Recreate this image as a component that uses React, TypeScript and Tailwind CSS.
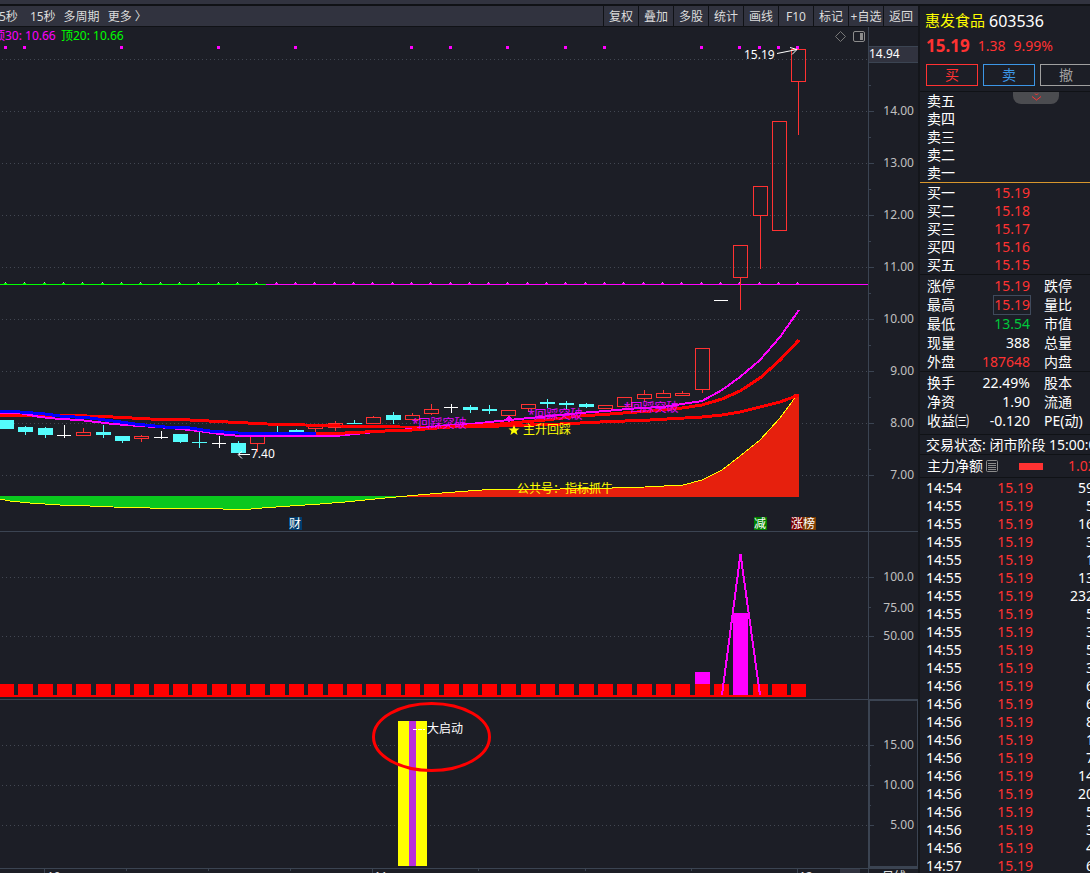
type CandleKind = "up" | "down" | "flat";

interface Candle {
  kind: CandleKind;
  top: number;
  bottom: number;
  high?: number;
  low?: number;
}

const candles: Candle[] = [
  { kind: "down", top: 420, bottom: 429 },
  { kind: "down", top: 427, bottom: 432, high: 426, low: 435 },
  { kind: "down", top: 428, bottom: 435, high: 427, low: 438 },
  { kind: "flat", top: 435, bottom: 436, high: 425, low: 438 },
  { kind: "up", top: 432, bottom: 436, high: 428 },
  { kind: "down", top: 432, bottom: 435, high: 425, low: 438 },
  { kind: "down", top: 436, bottom: 441, low: 443 },
  { kind: "up", top: 436, bottom: 439, high: 435, low: 442 },
  { kind: "flat", top: 437, bottom: 438, high: 431, low: 439 },
  { kind: "down", top: 434, bottom: 442, low: 443 },
  { kind: "down", top: 442, bottom: 443, high: 432, low: 448 },
  { kind: "flat", top: 443, bottom: 444, high: 436, low: 448 },
  { kind: "down", top: 443, bottom: 453, high: 441 },
  { kind: "up", top: 436, bottom: 444, low: 452 },
  { kind: "down", top: 432, bottom: 433, high: 425 },
  { kind: "down", top: 430, bottom: 432, high: 429, low: 433 },
  { kind: "up", top: 424, bottom: 429, low: 432 },
  { kind: "up", top: 423, bottom: 428, high: 421, low: 431 },
  { kind: "down", top: 423, bottom: 424, high: 420 },
  { kind: "up", top: 417, bottom: 424, high: 416 },
  { kind: "down", top: 415, bottom: 420, high: 412, low: 424 },
  { kind: "up", top: 415, bottom: 420, high: 413 },
  { kind: "up", top: 409, bottom: 414, high: 404, low: 415 },
  { kind: "flat", top: 407, bottom: 408, high: 404, low: 413 },
  { kind: "down", top: 407, bottom: 410, high: 405, low: 413 },
  { kind: "down", top: 409, bottom: 411, high: 405, low: 414 },
  { kind: "up", top: 410, bottom: 416 },
  { kind: "up", top: 404, bottom: 409, low: 412 },
  { kind: "down", top: 402, bottom: 404, high: 399, low: 408 },
  { kind: "down", top: 403, bottom: 405, high: 401, low: 409 },
  { kind: "down", top: 404, bottom: 407, high: 403, low: 408 },
  { kind: "up", top: 405, bottom: 409 },
  { kind: "up", top: 397, bottom: 407 },
  { kind: "up", top: 394, bottom: 399, high: 390, low: 402 },
  { kind: "up", top: 393, bottom: 398, high: 390 },
  { kind: "up", top: 393, bottom: 396, high: 391 },
  { kind: "up", top: 348, bottom: 390, low: 393 },
  { kind: "flat", top: 300, bottom: 301 },
  { kind: "up", top: 245, bottom: 278, low: 310 },
  { kind: "up", top: 186, bottom: 216, low: 269 },
  { kind: "up", top: 121, bottom: 231 },
  { kind: "up", top: 49, bottom: 82, low: 135 },
];

const centerOf = (i: number) => Math.round(6.15 + i * 19.32);

const signalDots = [0, 1, 6, 11, 15, 21, 23, 26, 29, 31, 36, 38, 39, 40, 41];

const fills: Record<CandleKind, string> = {
  up: "#ff3232",
  down: "#54fcfc",
  flat: "#ffffff",
};

const AREA_LINE =
  "0,499 10,501 30,503 60,505 90,506 113,507 150,508 205,508 240,510 262,508 290,506 320,504 345,502 365,500 385,498 407,496 430,494 455,492 482,490 515,489 560,489 612,488 645,487 683,485 702,480 722,470 740,456 760,440 780,418 794,399 798,394";

const toolbarLeft = ["5秒", "15秒", "多周期", "更多 〉"];
const toolbarRight = ["复权", "叠加", "多股", "统计", "画线", "F10", "标记", "+自选", "返回"];

const sells = ["卖五", "卖四", "卖三", "卖二", "卖一"];
const buys = [
  ["买一", "15.19"],
  ["买二", "15.18"],
  ["买三", "15.17"],
  ["买四", "15.16"],
  ["买五", "15.15"],
];

interface Stat {
  label: string;
  value: string;
  color: string;
  next: string;
  boxed?: boolean;
}

const quoteStats: Stat[] = [
  { label: "涨停", value: "15.19", color: "text-[#ff3232]", next: "跌停" },
  { label: "最高", value: "15.19", color: "text-[#ff3232]", next: "量比", boxed: true },
  { label: "最低", value: "13.54", color: "text-[#00c83c]", next: "市值" },
  { label: "现量", value: "388", color: "text-white", next: "总量" },
  { label: "外盘", value: "187648", color: "text-[#ff3232]", next: "内盘" },
];

const baseStats: Stat[] = [
  { label: "换手", value: "22.49%", color: "text-white", next: "股本" },
  { label: "净资", value: "1.90", color: "text-white", next: "流通" },
  { label: "收益㈢", value: "-0.120", color: "text-white", next: "PE(动)" },
];

const ticks = [
  ["14:54", "59"], ["14:55", "5"], ["14:55", "16"], ["14:55", "3"], ["14:55", "1"],
  ["14:55", "13"], ["14:55", "232"], ["14:55", "5"], ["14:55", "3"], ["14:55", "5"],
  ["14:55", "3"], ["14:56", "6"], ["14:56", "6"], ["14:56", "8"], ["14:56", "1"],
  ["14:56", "7"], ["14:56", "14"], ["14:56", "20"], ["14:56", "5"], ["14:56", "3"],
  ["14:56", "4"], ["14:57", "6"],
];

// one- and two-digit volumes keep the column of a three-digit one
const volumePad: Record<number, string> = {
  1: "pl-4",
  2: "pl-2",
  3: "pl-0",
};

function GridLine({ y }: { y: number }) {
  return <line x1="2" x2="868" y1={y + 0.5} y2={y + 0.5} stroke="#424752" strokeDasharray="1 3" />;
}

function Axis({ labels, minor }: { labels: [number, string][]; minor: number[] }) {
  return (
    <g>
      {labels.map(([y, label]) => (
        <g key={y}>
          <path d={`M869 ${y + 0.5}h5`} stroke="#3b4452" />
          <text x="914" y={y + 4} textAnchor="end" fill="#c0c0c0">{label}</text>
        </g>
      ))}
      {minor.map((y) => <path key={y} d={`M869 ${y + 0.5}h2`} stroke="#3b4452" />)}
    </g>
  );
}

function CandleShape({ c, x }: { c: Candle; x: number }) {
  const fill = fills[c.kind];
  const height = c.bottom - c.top;
  return (
    <g>
      {c.high !== undefined && <rect x={x} y={c.high} width="1" height={c.top - c.high} fill={fill} />}
      {c.low !== undefined && <rect x={x} y={c.bottom} width="1" height={c.low - c.bottom} fill={fill} />}
      {c.kind === "up" ? (
        <rect x={x - 6.5} y={c.top + 0.5} width="14" height={height - 1} fill="none" stroke={fill} />
      ) : (
        <rect x={x - 7} y={c.top} width={c.kind === "flat" ? 14 : 15} height={height} fill={fill} />
      )}
    </g>
  );
}

function Badge({ x, label, fill }: { x: number; label: string; fill: string }) {
  return (
    <g>
      <rect x={x} y="517" width="13" height="13" fill={fill} />
      <text x={x} y="528" fill="#fff">{label}</text>
    </g>
  );
}

function PriceChart() {
  return (
    <svg className="block h-[505px] w-full shrink-0 text-xs" shapeRendering="crispEdges">
      <g transform="translate(0 -27)">
        {[59, 111, 163, 215, 267, 319, 371, 423, 475].map((y) => <GridLine key={y} y={y} />)}

        <polygon points="0,496 407,496 385,498 365,500 345,502 320,504 290,506 262,508 240,510 205,508 150,508 113,507 90,506 60,505 30,503 10,501 0,499" fill="#0ac81e" />
        <polygon points="407,496 430,494 455,492 482,490 515,489 560,489 612,488 645,487 683,485 702,480 722,470 740,456 760,440 780,418 794,399 794,394 799,394 799,497 407,497" fill="#e6200d" />
        <polyline points={AREA_LINE} fill="none" stroke="#ffff00" />

        <path d="M0 284.5H266" stroke="#00ff00" />
        <path d="M266 284.5H868" stroke="#ff00ff" />
        {candles.map((c, i) => (
          <g key={i}>
            <rect x={centerOf(i) - 2} y="283" width="3" height="1" fill={i < 14 ? "#00ff00" : "#ff00ff"} />
            <rect x={centerOf(i) - 1} y="282" width="1" height="1" fill="#d8a0d8" />
            <CandleShape c={c} x={centerOf(i)} />
          </g>
        ))}
        {signalDots.map((i) => <rect key={i} x={centerOf(i) - 2} y="46" width="3" height="3" fill="#ff00ff" />)}

        <g fill="none">
          <polyline points="0,415 60,415 113,417 150,419 190,420 228,422 267,424 305,425 340,426 400,427 450,427 500,426 560,424 600,422 650,420 702,417 722,415 740,412 760,407 780,402 799,395" stroke="#ff0000" strokeWidth="3" />
          <polyline points="0,413 20,413 40,417 60,419 80,420 113,424 140,426 170,428 199,431 219,434 240,436 335,436 355,434 385,431 412,429 440,426 470,424 509,420 540,417 580,413 605,411 640,408 663,407 682,404 702,401 722,390 740,377 760,360 780,337 799,310" stroke="#ff00ff" strokeWidth="2" />
          <polyline points="0,411 20,412 45,414 60,416 90,418 113,421 135,424 165,427 190,428 210,431 238,433 316,434" stroke="#0000ff" strokeWidth="3" />
          <polyline points="316,434 345,433 385,431 412,430 450,427 500,424 545,420 580,416 610,414 650,411 682,408 702,405 722,399 740,391 760,378 780,360 799,340" stroke="#ff0000" strokeWidth="3" />
        </g>

        <g fill="#e600ff">
          <text x="412" y="428">*回踩突破</text>
          <text x="528" y="419">*回踩突破</text>
          <text x="624" y="412">*回踩突破</text>
        </g>
        <path d="M509 416l4 3-4 3-4-3z" fill="#ff00ff" />
        <g fill="#ffff00">
          <path d="M514 425l1.500 3.500h4l-3 2.500 1 4-3.500-2.500-3.500 2.500 1-4-3-2.500h4z" shapeRendering="auto" />
          <text x="523" y="434">主升回踩</text>
          <text x="517" y="493">公共号：指标抓牛</text>
        </g>

        <Badge x={289} label="财" fill="#003c6e" />
        <Badge x={754} label="减" fill="#008000" />
        <Badge x={791} label="涨" fill="#780000" />
        <Badge x={803} label="榜" fill="#7d3c00" />

        <g fill="none" stroke="#fff" shapeRendering="auto">
          <path d="M777 53.500L797 49.500M790 47.500l7 2-5 5" />
          <path d="M250 454.500h-11M242 451.500l-4 3 4 4" />
        </g>
        <text x="744" y="59" fill="#fff">15.19</text>
        <text x="251" y="458" fill="#fff">7.40</text>

        <text x="-7" y="40" fill="#ff00ff">顶30: 10.66</text>
        <text x="61" y="40" fill="#00ff00">顶20: 10.66</text>

        <g fill="none" stroke="#8c8c8c" shapeRendering="auto">
          <path d="M840.500 31.500l5 5-5 5-5-5z" stroke="#777" />
          <rect x="853.500" y="31.500" width="11" height="10" rx="1.500" />
          <rect x="860" y="33" width="3" height="7" fill="#8c8c8c" stroke="none" />
        </g>

        <path d="M868.500 27V532M0 531.500H918" stroke="#3b4452" />
        <Axis
          labels={[[111, "14.00"], [163, "13.00"], [215, "12.00"], [267, "11.00"], [319, "10.00"], [371, "9.00"], [423, "8.00"], [475, "7.00"]]}
          minor={[85, 137, 189, 241, 293, 345, 397, 449]}
        />
        <rect x="868.500" y="46.500" width="50" height="16" fill="#31333f" stroke="#3b4452" />
        <text x="869" y="58" fill="#fff">14.94</text>
      </g>
    </svg>
  );
}

function SignalChart() {
  return (
    <svg className="block h-[168px] w-full shrink-0 text-xs" shapeRendering="crispEdges">
      <g transform="translate(0 -532)">
        <GridLine y={577} />
        <GridLine y={636} />
        {candles.map((_, i) => (
          <rect key={i} x={centerOf(i) - 7} y="684" width="15" height="12" fill="#ff0000" />
        ))}
        <rect x="695" y="672" width="15" height="12" fill="#ff00ff" />
        <rect x="733" y="613" width="15" height="82" fill="#ff00ff" />
        <rect x="0" y="695" width="806" height="2" fill="#ff0000" />
        <path d="M722 695L740.500 554L760 695" fill="none" stroke="#ff00ff" strokeWidth="2" />
        <path d="M868.500 532V700M0 699.500H918" stroke="#3b4452" />
        <Axis labels={[[577, "100.0"], [636, "50.00"]]} minor={[607]} />
        <text x="914" y="612" textAnchor="end" fill="#c0c0c0">75.00</text>
      </g>
    </svg>
  );
}

function LaunchChart() {
  return (
    <svg className="block h-[168px] w-full shrink-0 text-xs" shapeRendering="crispEdges">
      <g transform="translate(0 -700)">
        <GridLine y={745} />
        <GridLine y={785} />
        <GridLine y={825} />
        <rect x="398" y="721" width="29" height="145" fill="#ffff00" />
        <rect x="409" y="721" width="7" height="145" fill="#b92fdc" />
        <path d="M413 729.500h12" stroke="#fff" strokeDasharray="4 1" />
        <text x="427" y="733" fill="#fff">大启动</text>
        <ellipse cx="431.500" cy="737" rx="58" ry="33.500" fill="none" stroke="#ff0000" strokeWidth="3" shapeRendering="auto" />
        <rect x="869" y="700" width="49" height="167" fill="none" stroke="#3b4452" strokeWidth="2" />
        <Axis labels={[[745, "15.00"], [785, "10.00"], [825, "5.00"]]} minor={[765, 805]} />
      </g>
    </svg>
  );
}

function TimeAxis() {
  return (
    <svg className="block min-h-[5px] w-full flex-1 text-xs" shapeRendering="crispEdges">
      <rect x="840" y="1" width="20" height="20" fill="#31333f" />
      <path d="M0 .5H918M44.500 0v20M126.500 0v3M208.500 0v3M290.500 0v3M372.500 0v20M478.500 0v3M585.500 0v3M691.500 0v3M797.500 0v20M868.500 0v20" stroke="#3b4452" />
      <g fill="#e0e0e0">
        <text x="47" y="13">10</text>
        <text x="374" y="13">11</text>
        <text x="799" y="13">12</text>
        <text x="882" y="13">日线</text>
      </g>
    </svg>
  );
}

function StatTable({ rows }: { rows: Stat[] }) {
  return (
    <table className="w-[240px] table-fixed">
      <tbody>
        {rows.map((r) => (
          <tr key={r.label} className="h-[19px] leading-[18px]">
            <th scope="row" className="w-[50px] whitespace-nowrap p-0 pl-[7px] text-left font-normal">{r.label}</th>
            <td className={`w-[60px] p-0 text-right ${r.color}`}>
              <span className={r.boxed ? "inline-block outline outline-[#3f4a5c]" : ""}>{r.value}</span>
            </td>
            <td className="p-0 pl-[14px]">{r.next}</td>
          </tr>
        ))}
      </tbody>
    </table>
  );
}

function QuotePanel() {
  return (
    <aside className="w-[172px] shrink-0 overflow-hidden border-l-2 border-[#14161b] text-sm text-white">
      <h1 className="flex h-[30px] items-center gap-1 whitespace-nowrap pl-[5px] text-[15px]">
        <span className="text-[#ffff00]">惠发食品</span>
        <span className="text-base">603536</span>
      </h1>
      <p className="flex h-5 items-center gap-2 pl-[6px] leading-5 text-[#ff3232]">
        <strong className="text-[17px]">15.19</strong>
        <span>1.38</span>
        <span>9.99%</span>
      </p>
      <div className="flex gap-[5px] border-b border-[#101216] pt-2 pb-[5px] pl-[6px]">
        <button className="h-[22px] w-[52px] shrink-0 border border-[#ff3232] leading-5 text-[#ff3232]">买</button>
        <button className="h-[22px] w-[52px] shrink-0 border border-[#3c96e6] leading-5 text-[#3c96e6]">卖</button>
        <button className="h-[22px] w-[52px] shrink-0 border border-[#a0a0a0] leading-5 text-[#a0a0a0]">撤</button>
      </div>

      <div className="relative border-b border-[#d7962d]">
        <table>
          <tbody>
            {sells.map((s) => (
              <tr key={s} className="h-[18px] leading-[18px]">
                <th scope="row" className="p-0 pl-[7px] font-normal">{s}</th>
              </tr>
            ))}
          </tbody>
        </table>
        <button aria-label="展开" className="absolute top-0 left-[93px] flex h-3 w-[46px] items-start justify-center rounded-b-lg bg-[#4b4c50] text-[#ff3232]">
          <svg className="h-[9px] w-[11px]" viewBox="0 0 11 9" fill="none" stroke="currentColor">
            <path d="M4 1.500l1.500 1.500 1.500-1.500M1 4.500l4.500 3.500 4.500-3.500" />
          </svg>
        </button>
      </div>
      <div className="border-b border-[#101216] pt-px">
        <table className="w-[240px] table-fixed">
          <tbody>
            {buys.map(([label, price]) => (
              <tr key={label} className="h-[18px] leading-[18px]">
                <th scope="row" className="w-[50px] p-0 pl-[7px] text-left font-normal">{label}</th>
                <td className="w-[60px] p-0 text-right text-[#ff3232]">{price}</td>
                <td className="p-0" />
              </tr>
            ))}
          </tbody>
        </table>
      </div>
      <div className="border-b border-[#101216] pt-px">
        <StatTable rows={quoteStats} />
      </div>
      <div className="border-b border-[#101216] pt-px pb-[4px]">
        <StatTable rows={baseStats} />
      </div>
      <p className="h-5 border-b border-[#101216] pl-[6px] leading-[19px] whitespace-nowrap">交易状态: 闭市阶段 15:00:00</p>
      <div className="flex h-[23px] items-center border-b border-[#101216] pl-[7px] whitespace-nowrap">
        <span>主力净额</span>
        <svg className="ml-[3px] size-3 shrink-0" viewBox="0 0 12 12" fill="none" stroke="#8c8c8c">
          <rect x=".5" y=".5" width="11" height="11" rx="1" />
          <path d="M2 3.500h8M2 5.500h8M2 7.500h8M2 9.500h8" />
        </svg>
        <span className="ml-[21px] h-[7px] w-6 shrink-0 bg-[#ff3232]" />
        <span className="ml-[25px] text-[#ff3232]">1.02亿</span>
      </div>
      <table className="mt-px w-[240px] table-fixed">
        <tbody>
          {ticks.map(([time, volume], i) => (
            <tr key={i} className="h-[18px] leading-[18px]">
              <td className="w-[50px] p-0 pl-[6px]">{time}</td>
              <td className="w-[63px] p-0 text-right text-[#ff3232]">15.19</td>
              <td className="p-0 pl-[37px]">
                <span className={volumePad[volume.length]}>{volume}</span>
              </td>
            </tr>
          ))}
        </tbody>
      </table>
    </aside>
  );
}

export default function App() {
  return (
    <div className="flex h-screen flex-col overflow-hidden bg-[#1c1e26] font-['Noto_Sans','Noto_Sans_CJK_SC',sans-serif]">
      <div className="h-[6px] shrink-0 border-b-2 border-[#101216] bg-[#31333f]" />
      <div className="flex min-h-0 flex-1">
        <main className="flex min-w-0 flex-1 flex-col overflow-hidden">
          <nav className="flex h-[21px] shrink-0 items-stretch justify-between border-b border-[#101216] bg-[#31333f] text-xs text-[#dcdcdc]">
            <div className="-ml-px flex pt-[2px]">
              {toolbarLeft.map((label, i) => (
                <button key={label} className={i === 0 ? "mr-3 whitespace-nowrap" : "mr-2 whitespace-nowrap"}>{label}</button>
              ))}
            </div>
            <div className="flex">
              {toolbarRight.map((label) => (
                <button key={label} className="w-[35px] border-l border-[#101216] pt-[2px] whitespace-nowrap">{label}</button>
              ))}
            </div>
          </nav>
          <PriceChart />
          <SignalChart />
          <LaunchChart />
          <TimeAxis />
        </main>
        <QuotePanel />
      </div>
    </div>
  );
}
